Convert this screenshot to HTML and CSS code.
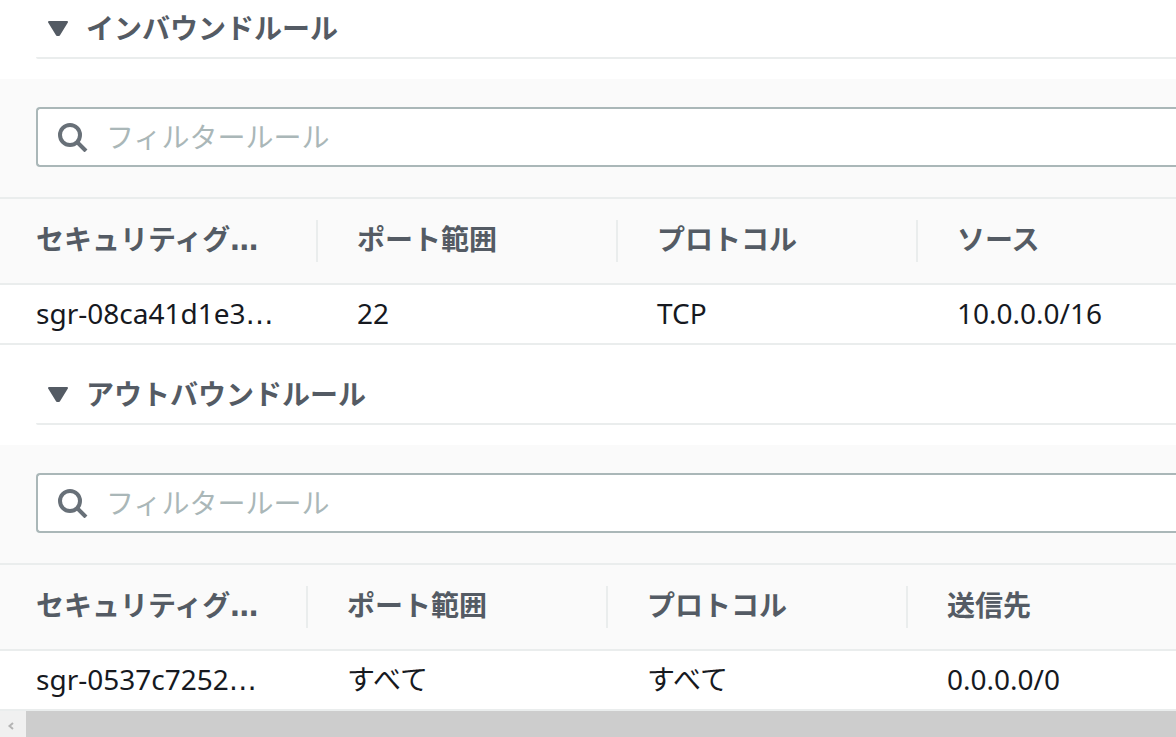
FILE: index.html
```html
<!DOCTYPE html>
<html lang="ja">
<head>
<meta charset="utf-8">
<meta name="viewport" content="width=device-width, initial-scale=1">
<title>セキュリティグループルール</title>
<link rel="stylesheet" href="styles.css">
</head>
<body>
<main class="panel">
  <section class="rules rules-inbound">
    <h2 class="rules-title">
      <button class="toggle" type="button" aria-expanded="true">
        <svg class="caret" viewBox="0 0 20 18" aria-hidden="true"><path d="M1 3h18L11 16H9z"/></svg>
        <span>インバウンドルール</span>
      </button>
    </h2>
    <div class="filter">
      <label class="search">
        <svg class="search-icon" viewBox="0 0 30 30" aria-hidden="true"><circle cx="12" cy="13" r="10"/><path d="M19 20l9 9"/></svg>
        <input class="search-input" type="text" placeholder="フィルタールール" aria-label="フィルタールール">
      </label>
    </div>
    <table class="table">
      <colgroup><col class="col-first"><col class="col"><col class="col"><col></colgroup>
      <thead>
        <tr><th scope="col"><div class="head">セキュリティグ<span class="more">…</span></div></th><th scope="col"><div class="head">ポート範囲</div></th><th scope="col"><div class="head">プロトコル</div></th><th scope="col"><div class="head">ソース</div></th></tr>
      </thead>
      <tbody>
        <tr><td>sgr-08ca41d1e3<span class="more">…</span></td><td>22</td><td>TCP</td><td>10.0.0.0/16</td></tr>
      </tbody>
    </table>
  </section>
  <section class="rules rules-outbound">
    <h2 class="rules-title">
      <button class="toggle" type="button" aria-expanded="true">
        <svg class="caret" viewBox="0 0 20 18" aria-hidden="true"><path d="M1 3h18L11 16H9z"/></svg>
        <span>アウトバウンドルール</span>
      </button>
    </h2>
    <div class="filter">
      <label class="search">
        <svg class="search-icon" viewBox="0 0 30 30" aria-hidden="true"><circle cx="12" cy="13" r="10"/><path d="M19 20l9 9"/></svg>
        <input class="search-input" type="text" placeholder="フィルタールール" aria-label="フィルタールール">
      </label>
    </div>
    <table class="table">
      <colgroup><col class="col-first"><col class="col"><col class="col"><col></colgroup>
      <thead>
        <tr><th scope="col"><div class="head">セキュリティグ<span class="more">…</span></div></th><th scope="col"><div class="head">ポート範囲</div></th><th scope="col"><div class="head">プロトコル</div></th><th scope="col"><div class="head">送信先</div></th></tr>
      </thead>
      <tbody>
        <tr><td>sgr-0537c7252<span class="more">…</span></td><td>すべて</td><td>すべて</td><td>0.0.0.0/0</td></tr>
      </tbody>
    </table>
  </section>
  <div class="scrollbar">
    <button class="scroll-left" type="button" aria-label="左へスクロール">
      <svg class="scroll-arrow" viewBox="0 0 8 8" aria-hidden="true"><path d="M6 1L2.5 4 6 7"/></svg>
    </button>
    <div class="scroll-thumb"></div>
  </div>
</main>
</body>
</html>
```
FILE: styles.css
```css
* {
  box-sizing: border-box;
}

body {
  margin: 0;
  background: #fff;
  color: #16191f;
  font-family: "Noto Sans", "Noto Sans CJK JP", sans-serif;
  font-size: 28px;
  line-height: 42px;
}

.rules-title {
  margin: 0 0 20px 36px;
  border-bottom: 2px solid #eaeded;
  border-bottom-left-radius: 2px;
  font-size: 28px;
}

.rules-inbound .rules-title {
  padding: 7px 0 8px;
}

.rules-outbound .rules-title {
  padding: 28px 0 8px;
}

.toggle {
  display: flex;
  align-items: center;
  gap: 18px;
  width: 100%;
  padding: 0 12px;
  border: 0;
  background: none;
  color: #545b64;
  font: inherit;
  font-weight: 700;
  line-height: 42px;
  text-align: left;
}

.caret {
  width: 20px;
  height: 18px;
  fill: #545b64;
  stroke: #545b64;
  stroke-width: 2;
  stroke-linejoin: round;
}

.filter {
  padding: 28px 0 30px 36px;
  background: #fafafa;
}

.search {
  display: flex;
  align-items: center;
  gap: 18px;
  height: 60px;
  padding-left: 20px;
  border: 2px solid #aab7b8;
  border-right: 0;
  border-radius: 4px 0 0 4px;
  background: #fff;
}

.search-icon {
  flex: none;
  width: 30px;
  height: 30px;
  fill: none;
  stroke: #687078;
  stroke-width: 4;
}

.search-input {
  flex: 1;
  min-width: 0;
  height: 42px;
  padding: 0;
  border: 0;
  outline: 0;
  background: none;
  color: #16191f;
  font: inherit;
}

.search-input::placeholder {
  color: #aab7b8;
  opacity: 1;
}

.table {
  width: 100%;
  border-spacing: 0;
  table-layout: fixed;
}

.rules-inbound .col-first {
  width: 318px;
}

.rules-outbound .col-first {
  width: 308px;
}

.col {
  width: 300px;
}

.table th {
  padding: 21px 0;
  border-top: 2px solid #eaeded;
  border-bottom: 2px solid #eaeded;
  background: #fafafa;
  color: #545b64;
  font-weight: 700;
  text-align: left;
}

.head {
  height: 42px;
  padding-left: 39px;
  border-right: 2px solid #eaeded;
  line-height: 38px;
  white-space: nowrap;
}

.table th:last-child .head {
  border-right: 0;
}

.table td {
  padding: 7px 0 9px 39px;
  border-bottom: 2px solid #eaeded;
  white-space: nowrap;
}

.table th:first-child .head,
.table td:first-child {
  padding-left: 36px;
}

.more {
  font-family: "DejaVu Sans", sans-serif;
  line-height: 1;
}

.scrollbar {
  display: flex;
  height: 26px;
  background: #f1f1f1;
}

.scroll-left {
  display: grid;
  flex: none;
  place-items: center;
  width: 26px;
  padding: 4px 4px 0 0;
  border: 0;
  background: #f0f0f0;
}

.scroll-arrow {
  width: 8px;
  height: 8px;
  fill: none;
  stroke: #b4b4b4;
  stroke-width: 2;
}

.scroll-thumb {
  flex: 1;
  background: #cdcdcd;
}
```
